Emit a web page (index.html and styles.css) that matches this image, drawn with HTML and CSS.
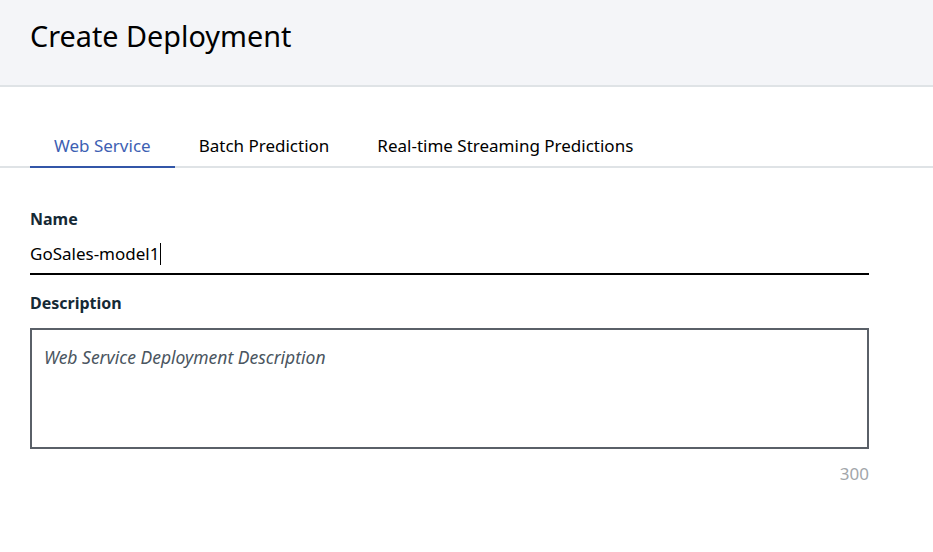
FILE: index.html
```html
<!DOCTYPE html>
<html lang="en">
<head>
<meta charset="utf-8">
<title>Create Deployment</title>
<link rel="stylesheet" href="styles.css">
</head>
<body>
<header class="page-header">
  <h1 class="page-title">Create Deployment</h1>
</header>
<main class="content">
  <nav class="tabs">
    <a class="tab tab-active">Web Service</a>
    <a class="tab">Batch Prediction</a>
    <a class="tab">Real-time Streaming Predictions</a>
  </nav>
  <form class="form">
    <label class="field-label">Name</label>
    <div class="text-input"><span class="input-value">GoSales-model1</span><span class="caret"></span></div>
    <label class="field-label label-desc">Description</label>
    <div class="textarea"><span class="placeholder">Web Service Deployment Description</span></div>
    <div class="counter">300</div>
  </form>
</main>
</body>
</html>
```

FILE: styles.css
```css
* { box-sizing: border-box; }
html, body { margin: 0; padding: 0; background: #ffffff; }
body {
  font-family: "Noto Sans", "Open Sans", sans-serif;
  color: #152935;
}
.page-header {
  height: 87px;
  background: #f4f5f8;
  border-bottom: 2px solid #dfe3e6;
  padding: 18px 30px 0;
}
.page-title {
  margin: 0;
  font-size: 28.8px;
  font-weight: 400;
  color: #000000;
  line-height: 36px;
}
.content { padding: 0; }
.tabs {
  display: flex;
  margin-top: 41px;
  padding-left: 30px;
  border-bottom: 2px solid #dfe3e6;
}
.tab {
  font-size: 17px;
  line-height: 24px;
  padding: 6px 24px 8px;
  color: #000000;
  margin-bottom: -2px;
  border-bottom: 2px solid transparent;
}
.tab-active {
  color: #3d5fb3;
  border-bottom-color: #3256a8;
}
.form {
  width: 839px;
  margin-left: 30px;
  display: flex;
  flex-direction: column;
}
.field-label {
  font-size: 16px;
  font-weight: 700;
  color: #152935;
  line-height: 20px;
  margin-top: 41px;
}
.text-input {
  margin-top: 14px;
  height: 32px;
  border-bottom: 2px solid #000000;
  display: flex;
  align-items: flex-start;
  font-size: 17px;
  line-height: 22px;
  color: #000000;
}
.caret {
  display: inline-block;
  width: 1px;
  height: 22px;
  background: #000000;
  margin-left: 1px;
}
.label-desc { margin-top: 18px; }
.textarea {
  margin-top: 15px;
  height: 121px;
  border: 2px solid #5a6068;
  padding: 15px 12px;
}
.placeholder {
  font-style: italic;
  font-size: 17.5px;
  color: #4a5560;
}
.counter {
  align-self: flex-end;
  margin-top: 13px;
  font-size: 17px;
  color: #a2a6aa;
}
```
